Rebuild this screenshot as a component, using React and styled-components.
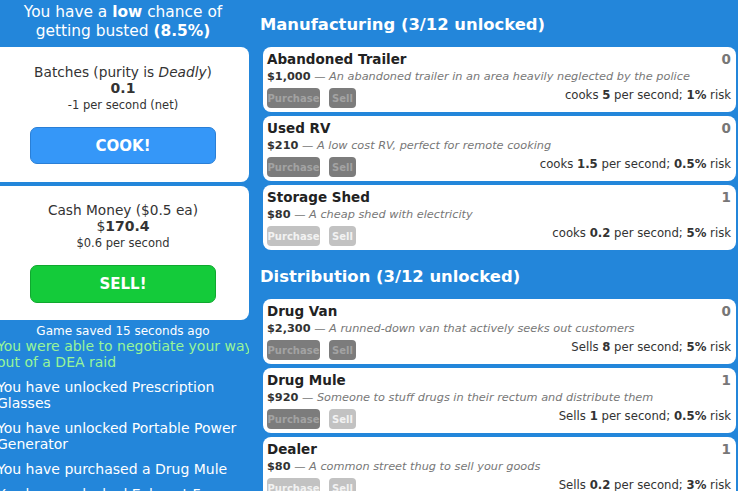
import styled, { createGlobalStyle } from 'styled-components'

const GlobalStyle = createGlobalStyle`
    html, body {
        margin: 0;
        padding: 0;
        background: #2386da;
    }
    body {
        font-family: "DejaVu Sans", Verdana, sans-serif;
        color: #333;
    }
`

const Page = styled.div`
    display: flex;
    width: 738px;
    height: 491px;
    overflow: hidden;
    background: #2386da;
`
const LeftCol = styled.div`
    flex: 0 0 252px;
    margin-left: -3px;
    padding-top: 3px;
    overflow: hidden;
`
const Busted = styled.div`
    color: #fff;
    font-size: 15.4px;
    line-height: 19px;
    text-align: center;
    margin-bottom: 6px;
    b { font-weight: bold; }
`
const Panel = styled.div`
    background: #fff;
    border-radius: 0 8px 8px 0;
    padding: ${p => p.$top}px 0 ${p => p.$bottom}px;
    margin-bottom: 4px;
    text-align: center;
`
const PanelLabel = styled.div`
    font-size: 13.7px;
    line-height: 15px;
`
const PanelAmount = styled.div`
    font-size: 14px;
    line-height: 17px;
    b { font-weight: bold; }
`
const PanelRate = styled.div`
    font-size: 11.5px;
    line-height: 14px;
    margin-top: 1px;
`
const BigButton = styled.div`
    box-sizing: border-box;
    width: 186px;
    height: ${p => p.$h}px;
    margin: 15px auto 0;
    border-radius: 7px;
    border: 1px solid ${p => p.$border};
    background: ${p => p.$bg};
    color: #fff;
    font-size: 15px;
    font-weight: bold;
    display: flex;
    align-items: center;
    justify-content: center;
`
const Saved = styled.div`
    color: #fff;
    font-size: 12px;
    line-height: 13px;
    text-align: center;
    margin-top: 5px;
`
const LogItem = styled.p`
    width: 262px;
    margin: 0 0 9px;
    font-size: 14px;
    line-height: 16px;
    color: ${p => (p.$good ? '#98f598' : '#fff')};
`
const RightCol = styled.div`
    flex: 1;
    margin-left: 11px;
    padding: 15px 2px 0 0;
`
const Section = styled.section`
    & + & { margin-top: 17px; }
`
const Heading = styled.h2`
    margin: 0 0 12px;
    color: #fff;
    font-size: 16.4px;
    line-height: 20px;
    font-weight: bold;
`
const Card = styled.div`
    box-sizing: border-box;
    height: 65px;
    margin: 0 0 4px 3px;
    padding: 4px 5px 0 4px;
    background: #fff;
    border-radius: 8px;
`
const TitleRow = styled.div`
    display: flex;
    justify-content: space-between;
    font-size: 13.5px;
    line-height: 17px;
    font-weight: bold;
    color: #222;
    span { color: #777; }
`
const Desc = styled.div`
    font-size: 11.3px;
    line-height: 17px;
    color: #777;
    white-space: nowrap;
    b { color: #333; font-weight: bold; }
    i { font-style: italic; }
`
const ActionRow = styled.div`
    display: flex;
    align-items: flex-start;
    margin-top: 3px;
`
const SmallButton = styled.div`
    height: 20px;
    width: ${p => p.$w}px;
    margin-right: 9px;
    border-radius: 4px;
    background: ${p => (p.$off ? '#c2c2c2' : '#7c7c7c')};
    color: ${p => (p.$off ? '#f2f2f2' : '#a3a3a3')};
    font-size: 10px;
    font-weight: bold;
    display: flex;
    align-items: center;
    justify-content: center;
`
const Stats = styled.div`
    margin-left: auto;
    font-size: 11.7px;
    line-height: 14px;
    color: #333;
    b { font-weight: bold; }
`

const manufacturing = [
    { name: 'Abandoned Trailer', count: 0, price: '$1,000', desc: 'An abandoned trailer in an area heavily neglected by the police', verb: 'cooks', rate: '5', risk: '1%', buyOff: false, sellOff: false },
    { name: 'Used RV', count: 0, price: '$210', desc: 'A low cost RV, perfect for remote cooking', verb: 'cooks', rate: '1.5', risk: '0.5%', buyOff: false, sellOff: false },
    { name: 'Storage Shed', count: 1, price: '$80', desc: 'A cheap shed with electricity', verb: 'cooks', rate: '0.2', risk: '5%', buyOff: true, sellOff: true },
]

const distribution = [
    { name: 'Drug Van', count: 0, price: '$2,300', desc: 'A runned-down van that actively seeks out customers', verb: 'Sells', rate: '8', risk: '5%', buyOff: false, sellOff: false },
    { name: 'Drug Mule', count: 1, price: '$920', desc: 'Someone to stuff drugs in their rectum and distribute them', verb: 'Sells', rate: '1', risk: '0.5%', buyOff: false, sellOff: true },
    { name: 'Dealer', count: 1, price: '$80', desc: 'A common street thug to sell your goods', verb: 'Sells', rate: '0.2', risk: '3%', buyOff: true, sellOff: true },
]

const log = [
    { text: 'You were able to negotiate your way out of a DEA raid', good: true },
    { text: 'You have unlocked Prescription Glasses' },
    { text: 'You have unlocked Portable Power Generator' },
    { text: 'You have purchased a Drug Mule' },
    { text: 'You have unlocked Exhaust Fans' },
]

const Building = ({ b }) => (
    <Card>
        <TitleRow>
            {b.name}
            <span>{b.count}</span>
        </TitleRow>
        <Desc>
            <b>{b.price}</b> — <i>{b.desc}</i>
        </Desc>
        <ActionRow>
            <SmallButton $w={53} $off={b.buyOff}>Purchase</SmallButton>
            <SmallButton $w={27} $off={b.sellOff}>Sell</SmallButton>
            <Stats>
                {b.verb} <b>{b.rate}</b> per second; <b>{b.risk}</b> risk
            </Stats>
        </ActionRow>
    </Card>
)

export default function App() {
    return (
        <Page>
            <GlobalStyle />
            <LeftCol>
                <Busted>
                    You have a <b>low</b> chance of getting busted <b>(8.5%)</b>
                </Busted>
                <Panel $top={18} $bottom={18}>
                    <PanelLabel>Batches (purity is <i>Deadly</i>)</PanelLabel>
                    <PanelAmount><b>0.1</b></PanelAmount>
                    <PanelRate>-1 per second (net)</PanelRate>
                    <BigButton $h={37} $bg="#3597f8" $border="#2a7fd6">COOK!</BigButton>
                </Panel>
                <Panel $top={17} $bottom={17}>
                    <PanelLabel>Cash Money ($0.5 ea)</PanelLabel>
                    <PanelAmount>$<b>170.4</b></PanelAmount>
                    <PanelRate>$0.6 per second</PanelRate>
                    <BigButton $h={38} $bg="#14cb3a" $border="#10a82f">SELL!</BigButton>
                </Panel>
                <Saved>Game saved 15 seconds ago</Saved>
                {log.map((l, i) => (
                    <LogItem key={i} $good={l.good}>{l.text}</LogItem>
                ))}
            </LeftCol>
            <RightCol>
                <Section>
                    <Heading>Manufacturing (3/12 unlocked)</Heading>
                    {manufacturing.map(b => <Building key={b.name} b={b} />)}
                </Section>
                <Section>
                    <Heading>Distribution (3/12 unlocked)</Heading>
                    {distribution.map(b => <Building key={b.name} b={b} />)}
                </Section>
            </RightCol>
        </Page>
    )
}
